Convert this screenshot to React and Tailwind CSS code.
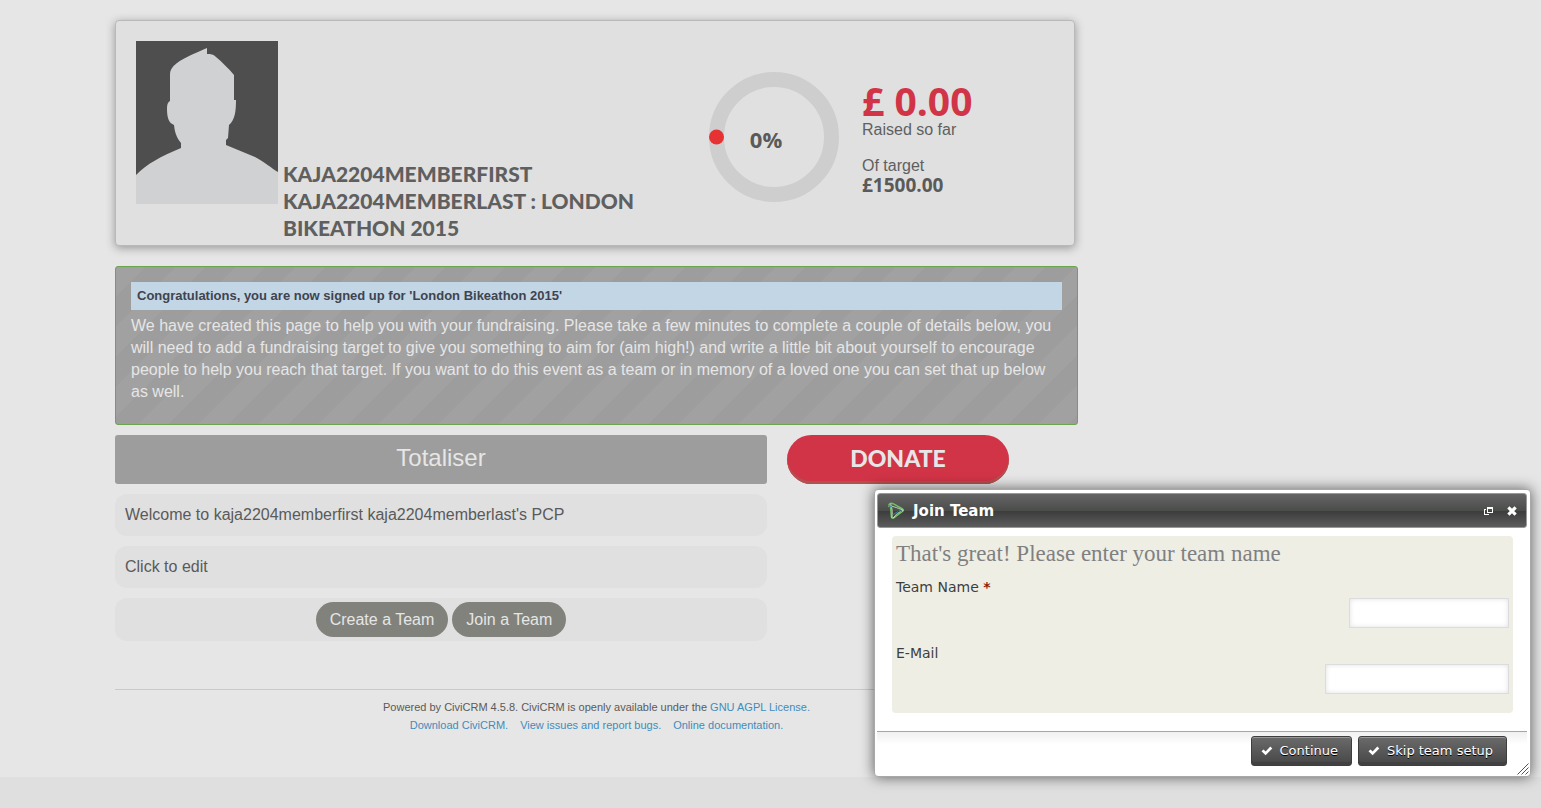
import React from "react";

const sans = "font-['Liberation_Sans',Arial,sans-serif]";
const humanist = "font-['Open_Sans','Noto_Sans',sans-serif]";

function Avatar() {
  return (
    <svg viewBox="0 0 142 163" className="h-[163px] w-[142px] shrink-0" role="img" aria-label="Profile photo">
      <rect width="142" height="163" fill="#4e4e4e" />
      <path
        fill="#d0d1d3"
        d="M0 163V134C12 122 24 116 45 107V102C42 98 39 94 38 84C33 82 31 77 31 68C31 63 32 61 34 60V34C34 29 36 26 41 22C49 16 62 11 71 7V13C75 13 77 13 80 16C86 21 93 28 98 34V59H100C100 70 99 79 93 84L92 97L90 99V104L119 116C129 121 135 127 142 131V163Z"
      />
    </svg>
  );
}

function ProgressRing() {
  return (
    <div className="relative h-[130px] w-[130px] shrink-0">
      <svg viewBox="0 0 130 130" className="h-full w-full" aria-hidden="true">
        <circle cx="65" cy="65" r="57.5" fill="none" stroke="#cecece" strokeWidth="15" />
        <circle cx="7.5" cy="65" r="7.5" fill="#e63232" />
      </svg>
      <span className={`absolute inset-0 flex items-center justify-center pr-4 pt-1 text-[22px] font-bold text-[#5a5a5a] ${humanist}`}>
        0%
      </span>
    </div>
  );
}

function SummaryCard() {
  return (
    <section className="flex max-w-[960px] rounded border border-[#b9b9b9] bg-[#e0e0e0] px-5 pt-5 pb-1 shadow-[0_2px_10px_rgba(0,0,0,0.35)]">
      <div className="flex min-w-0 flex-1 gap-[5px]">
        <Avatar />
        <h1 className="max-w-[360px] self-end pt-[119px] font-['Lato','Open_Sans',sans-serif] text-[21px] leading-[27px] font-black text-[#5f5f5f] uppercase">
          kaja2204memberfirst kaja2204memberlast : London Bikeathon 2015
        </h1>
      </div>
      <div className="flex w-[345px] shrink-0 gap-[23px] pt-[31px]">
        <ProgressRing />
        <div className="pt-[9px] text-[16px] leading-[18px] text-[#5f5f5f]">
          <p className={`text-[39px] leading-[40px] font-bold text-[#d13446] ${humanist}`}>£ 0.00</p>
          <p>Raised so far</p>
          <p className="mt-[18px]">Of target</p>
          <p className={`text-[19px] leading-[20px] font-bold text-[#5a5a5a] ${humanist}`}>£1500.00</p>
        </div>
      </div>
    </section>
  );
}

function Notice() {
  return (
    <section className="mt-5 rounded-[3px] border border-[#6ba550] bg-[#9d9d9d] bg-[linear-gradient(135deg,#a1a1a1_25%,#9d9d9d_25%,#9d9d9d_50%,#a1a1a1_50%,#a1a1a1_75%,#9d9d9d_75%,#9d9d9d)] bg-[size:60px_60px] px-[15px] pt-[15px] pb-[21px]">
      <h2 className="bg-[#c3d6e5] px-1.5 text-[13px] leading-[28px] font-bold text-[#3e4450]">
        Congratulations, you are now signed up for 'London Bikeathon 2015'
      </h2>
      <p className="mt-[5px] text-[16px] leading-[22px] text-[#e6e6e6]">
        We have created this page to help you with your fundraising. Please take a few minutes to complete a couple of
        details below, you will need to add a fundraising target to give you something to aim for (aim high!) and write
        a little bit about yourself to encourage people to help you reach that target. If you want to do this event as a
        team or in memory of a loved one you can set that up below as well.
      </p>
    </section>
  );
}

function Footer() {
  const link = "text-[#3f8cbb]";
  return (
    <footer className="mt-12 border-t border-[#cacaca] pt-2 text-center text-[11px] leading-[18px] text-[#5a5a5a]">
      <p>
        Powered by CiviCRM 4.5.8. CiviCRM is openly available under the{" "}
        <a href="#license" className={link}>GNU AGPL License.</a>
      </p>
      <p className="flex justify-center gap-3">
        <a href="#download" className={link}>Download CiviCRM.</a>
        <a href="#issues" className={link}>View issues and report bugs.</a>
        <a href="#docs" className={link}>Online documentation.</a>
      </p>
    </footer>
  );
}

function Check() {
  return (
    <svg viewBox="0 0 12 10" className="h-[10px] w-[12px]" aria-hidden="true">
      <path d="M0.5 5.3L2.6 3.4L4.6 5.4L9.3 0.6L11.3 2.5L4.6 9.2Z" fill="#fff" />
    </svg>
  );
}

function DialogButton({ children }) {
  return (
    <button
      type="button"
      className="flex h-[30px] items-center gap-[7px] rounded-[3px] border border-[#3e3e3e] bg-linear-to-b from-[#6b6b6b] to-[#464646] pr-[13px] pl-[9px] text-[13px] text-white shadow-[inset_0_1px_0_#999,inset_0_-3px_0_#414141] [text-shadow:0_1px_0_#000]"
    >
      <Check />
      {children}
    </button>
  );
}

function JoinTeamDialog() {
  const field =
    "h-[30px] border border-[#dcdcdc] bg-white px-2 shadow-[inset_0_0_5px_rgba(0,0,0,0.12)] outline-none";
  return (
    <div
      role="dialog"
      aria-labelledby="join-title"
      className="absolute top-[489px] right-[10px] w-[657px] rounded border border-[#a8a8a8] bg-white py-[2px] pr-[3px] pl-[2px] font-['DejaVu_Sans',Verdana,sans-serif] text-[14px] text-[#3e3e3e] shadow-[0_0_14px_rgba(0,0,0,0.6)]"
    >
      <header className="mt-px flex h-[35px] items-center rounded-[3px] border border-[#999] bg-[linear-gradient(to_bottom,#646564,#4b4d4b_50%,#3c3c3c_52%,#5c5c5c)] pt-px pr-1 pl-[9px] text-white">
        <svg viewBox="0 0 18 18" className="h-[18px] w-[18px]" fill="none" strokeLinejoin="round" strokeLinecap="round" aria-hidden="true">
          <path d="M2 2.6C3 0.8 5 1.2 7 2.2L15.6 7C16.8 8 16.4 8.8 15.4 9.4L7.4 15.4C6 16.6 4.6 16.4 4.4 14.6L3.6 5.4" stroke="#6fc268" strokeWidth="1.5" />
          <path d="M1.6 4.2C5 3.4 10 6 15.4 7.8M16 8.6C11.5 10 8.5 12.5 6.4 16M5 15.6C5.6 11 5.2 6.5 3.8 2.2" stroke="#d7f1c5" strokeWidth="0.8" />
          <path d="M2.2 4.8L4.6 4.6M6 12.6L10.6 9.8M14.6 9.6L11.8 8" stroke="#2c83a0" strokeWidth="1" />
        </svg>
        <h2 id="join-title" className="ml-2 flex-1 text-[15px] font-bold">Join Team</h2>
        <button type="button" aria-label="Expand" className="flex h-5 w-5 items-center justify-center">
          <svg viewBox="0 0 9 8" className="h-[8px] w-[9px]" aria-hidden="true" shapeRendering="crispEdges">
            <path fill="#fff" fillRule="evenodd" d="M3 0H9V6H3ZM4 2V5H8V2ZM0 2H2V3H1V7H5V8H0Z" />
          </svg>
        </button>
        <button type="button" aria-label="Close" className="ml-1 flex h-5 w-5 items-center justify-center">
          <svg viewBox="0 0 10 10" className="h-[10px] w-[10px]" aria-hidden="true">
            <path d="M1.4 1.4L8.6 8.6M8.6 1.4L1.4 8.6" stroke="#fff" strokeWidth="3.2" />
          </svg>
        </button>
      </header>
      <form className="mt-2 mr-[14px] mb-[18px] ml-[15px] flex h-[177px] flex-col rounded bg-[#eeeee5] px-1 pt-1">
        <h3 className="font-['Liberation_Serif',serif] text-[23px] leading-[28px] text-[#808080]">
          That's great! Please enter your team name
        </h3>
        <label htmlFor="team-name" className="mt-2 leading-[22px]">
          Team Name <span className="font-bold text-[#8a1f11]">*</span>
        </label>
        <input id="team-name" type="text" className={`w-[160px] self-end ${field}`} />
        <label htmlFor="team-email" className="mt-[14px] leading-[22px]">E-Mail</label>
        <input id="team-email" type="email" className={`w-[184px] self-end ${field}`} />
      </form>
      <div className="flex h-[43px] justify-end gap-1.5 border-t border-[#a5a5a5] bg-linear-to-b from-[#f0f0f0] to-white to-30% pt-1 pr-5">
        <DialogButton>Continue</DialogButton>
        <DialogButton>Skip team setup</DialogButton>
      </div>
      <svg viewBox="0 0 12 12" className="absolute right-px bottom-px h-3 w-3" aria-hidden="true">
        <path d="M0.5 11.5L11.5 0.5M4.5 11.5L11.5 4.5M8.5 11.5L11.5 8.5" stroke="#555" strokeWidth="1" />
      </svg>
    </div>
  );
}

export default function App() {
  const panel = "w-full rounded-xl bg-[#e0e0e0] px-2.5 text-left text-[16px]";
  return (
    <div className={`relative flex min-h-screen flex-col bg-[#dfdfdf] text-[#5a5a5a] ${sans}`}>
      <main className="bg-[#e6e6e6] pt-5 pr-5 pb-[43px] pl-[115px]">
        <div className="max-w-[963px]">
          <SummaryCard />
          <Notice />
          <div className="mt-2.5 flex items-start gap-5">
            <div className="flex max-w-[652px] flex-1 flex-col gap-2.5">
              <h2 className="rounded-[3px] bg-[#9d9d9d] pb-[3px] text-center text-[24px] leading-[46px] text-[#e6e6e6]">Totaliser</h2>
              <button type="button" className={`h-[42px] ${panel}`}>
                Welcome to kaja2204memberfirst kaja2204memberlast's PCP
              </button>
              <button type="button" className={`h-[42px] ${panel}`}>Click to edit</button>
              <div className="flex h-[43px] items-center justify-center gap-1 rounded-xl bg-[#e0e0e0]">
                <button type="button" className="h-[35px] rounded-[18px] bg-[#81827c] px-[14px] text-[16px] text-[#e6e6e6]">Create a Team</button>
                <button type="button" className="h-[35px] rounded-[18px] bg-[#81827c] px-[14px] text-[16px] text-[#e6e6e6]">Join a Team</button>
              </div>
            </div>
            <button type="button" className="h-[49px] w-[222px] rounded-[25px] bg-[#d13446] pb-0.5 font-['Lato','Open_Sans',sans-serif] text-[23px] font-black text-[#e6e6e6] shadow-[inset_0_-3px_0_#b05250]">
              DONATE
            </button>
          </div>
          <Footer />
        </div>
      </main>
      <JoinTeamDialog />
    </div>
  );
}
